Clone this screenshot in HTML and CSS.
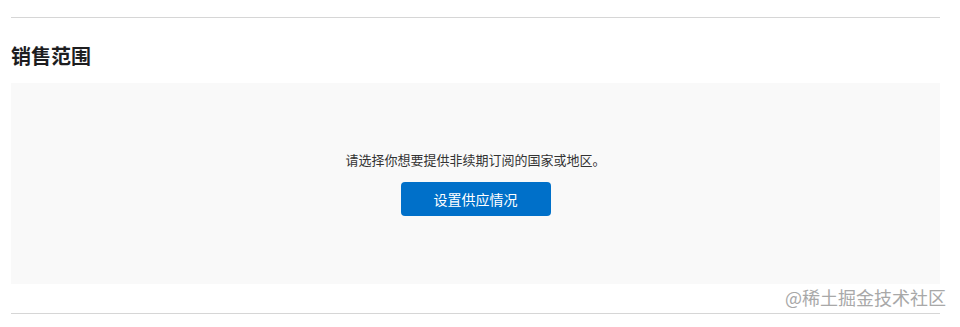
FILE: index.html
```html
<!DOCTYPE html>
<html lang="zh-CN">
<head>
<meta charset="utf-8">
<title>销售范围</title>
<link rel="stylesheet" href="styles.css">
</head>
<body>
<div class="page">
  <div class="rule rule-top"></div>
  <h2 class="title">销售范围</h2>
  <div class="panel">
    <p class="hint">请选择你想要提供非续期订阅的国家或地区。</p>
    <button class="btn">设置供应情况</button>
  </div>
  <div class="rule rule-bottom"></div>
</div>
<div class="watermark">@稀土掘金技术社区</div>
</body>
</html>
```

FILE: styles.css
```css
html, body {
  margin: 0;
  padding: 0;
  background: #fff;
}
body {
  font-family: "Noto Sans CJK SC", "Noto Sans", sans-serif;
  color: #333;
  width: 960px;
  height: 327px;
  overflow: hidden;
  position: relative;
}
.page {
  margin-left: 11px;
  width: 929px;
}
.rule {
  height: 1px;
  background: #d6d6d6;
}
.rule-top {
  margin-top: 17px;
}
.title {
  margin: 24px 0 0 0;
  font-size: 20px;
  line-height: 28px;
  font-weight: 700;
  color: #1d1d1f;
}
.panel {
  margin-top: 13px;
  height: 201px;
  background: #f9f9f9;
  display: flex;
  flex-direction: column;
  align-items: center;
  justify-content: center;
  gap: 13px;
}
.hint {
  margin: 0;
  font-size: 13px;
  line-height: 18px;
  color: #333;
}
.btn {
  width: 150px;
  height: 34px;
  border: none;
  border-radius: 4px;
  background: #0070c9;
  color: #fff;
  font-family: "Noto Sans CJK SC", "Noto Sans", sans-serif;
  font-size: 14px;
  padding: 0;
  cursor: pointer;
}
.rule-bottom {
  margin-top: 29px;
}
.watermark {
  position: absolute;
  left: 785px;
  top: 285px;
  font-family: "Noto Sans CJK SC", sans-serif;
  font-size: 18px;
  line-height: 24px;
  color: #a8a8a8;
  white-space: nowrap;
}
```
